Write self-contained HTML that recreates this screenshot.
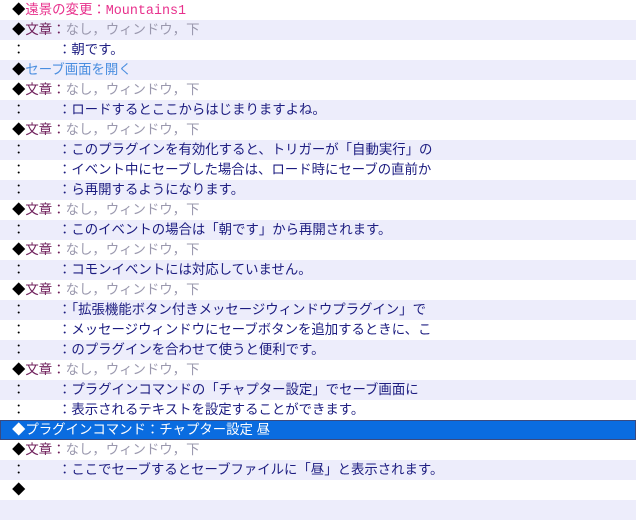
<!DOCTYPE html>
<html><head><meta charset="utf-8"><style>
body{margin:0;width:636px;height:520px;overflow:hidden;background:#fff;font-family:"Liberation Sans","Noto Sans CJK JP",sans-serif;font-size:13.4px}
.r{height:20px;line-height:20px;position:relative;white-space:nowrap;padding-left:12px}
.r:nth-child(even){background:#ededfb}
.d{color:#000}
.p{color:#e8308c}
.b{color:#4a8ee0}
.m{color:#70205c}
.g{color:#9a98ae}
.t{color:#1c1c80}
.c{position:absolute;left:12px;color:#000}
.c2{position:absolute;left:58px}
.sel{background:#0a6ce0!important;color:#fff;outline:1px solid #3a4a80;outline-offset:-1px}
.mono{font-family:"Liberation Mono","Noto Sans CJK JP",monospace}
</style></head><body>
<div class="r"><span class="d">◆</span><span class="p">遠景の変更：<span class="mono">Mountains1</span></span></div>
<div class="r"><span class="d">◆</span><span class="m">文章：</span><span class="g">なし，ウィンドウ，下</span></div>
<div class="r"><span class="c">：</span><span class="c2 t">：朝です。</span></div>
<div class="r"><span class="d">◆</span><span class="b">セーブ画面を開く</span></div>
<div class="r"><span class="d">◆</span><span class="m">文章：</span><span class="g">なし，ウィンドウ，下</span></div>
<div class="r"><span class="c">：</span><span class="c2 t">：ロードするとここからはじまりますよね。</span></div>
<div class="r"><span class="d">◆</span><span class="m">文章：</span><span class="g">なし，ウィンドウ，下</span></div>
<div class="r"><span class="c">：</span><span class="c2 t">：このプラグインを有効化すると、トリガーが「自動実行」の</span></div>
<div class="r"><span class="c">：</span><span class="c2 t">：イベント中にセーブした場合は、ロード時にセーブの直前か</span></div>
<div class="r"><span class="c">：</span><span class="c2 t">：ら再開するようになります。</span></div>
<div class="r"><span class="d">◆</span><span class="m">文章：</span><span class="g">なし，ウィンドウ，下</span></div>
<div class="r"><span class="c">：</span><span class="c2 t">：このイベントの場合は「朝です」から再開されます。</span></div>
<div class="r"><span class="d">◆</span><span class="m">文章：</span><span class="g">なし，ウィンドウ，下</span></div>
<div class="r"><span class="c">：</span><span class="c2 t">：コモンイベントには対応していません。</span></div>
<div class="r"><span class="d">◆</span><span class="m">文章：</span><span class="g">なし，ウィンドウ，下</span></div>
<div class="r"><span class="c">：</span><span class="c2 t">：「拡張機能ボタン付きメッセージウィンドウプラグイン」で</span></div>
<div class="r"><span class="c">：</span><span class="c2 t">：メッセージウィンドウにセーブボタンを追加するときに、こ</span></div>
<div class="r"><span class="c">：</span><span class="c2 t">：のプラグインを合わせて使うと便利です。</span></div>
<div class="r"><span class="d">◆</span><span class="m">文章：</span><span class="g">なし，ウィンドウ，下</span></div>
<div class="r"><span class="c">：</span><span class="c2 t">：プラグインコマンドの「チャプター設定」でセーブ画面に</span></div>
<div class="r"><span class="c">：</span><span class="c2 t">：表示されるテキストを設定することができます。</span></div>
<div class="r sel">◆プラグインコマンド：チャプター設定 昼</div>
<div class="r"><span class="d">◆</span><span class="m">文章：</span><span class="g">なし，ウィンドウ，下</span></div>
<div class="r"><span class="c">：</span><span class="c2 t">：ここでセーブするとセーブファイルに「昼」と表示されます。</span></div>
<div class="r"><span class="d">◆</span></div>
<div class="r"></div>
</body></html>
